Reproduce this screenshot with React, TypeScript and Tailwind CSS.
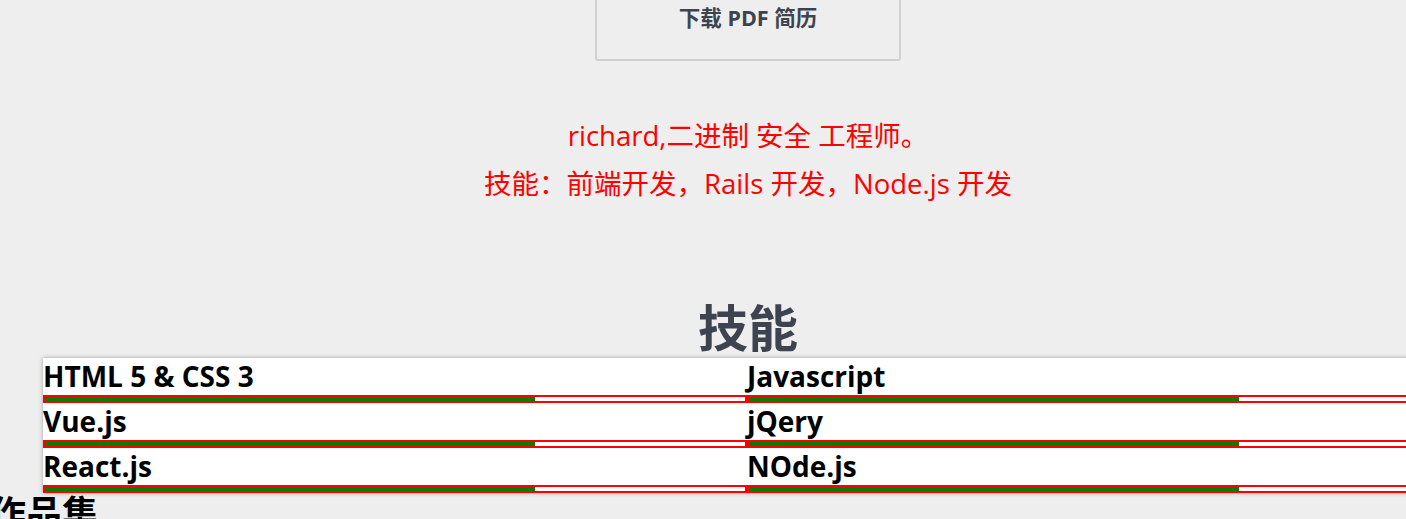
const skills = [
  { name: "HTML 5 & CSS 3", level: 70 },
  { name: "Javascript", level: 70 },
  { name: "Vue.js", level: 70 },
  { name: "jQery", level: 70 },
  { name: "React.js", level: 70 },
  { name: "NOde.js", level: 70 },
]

const font = { fontFamily: '"Open Sans", "Noto Sans CJK SC", sans-serif' }

export default function App() {
  return (
    <div className="min-h-[519px] w-full overflow-hidden bg-[#eeeeee]" style={font}>
      <div className="w-[1496px]">
        <div className="mx-auto flex h-[61px] w-[306px] justify-center rounded-b-[3px] border-2 border-t-0 border-[#d0d0d0] text-[21.5px] font-bold leading-[36px] text-[#3d4450]">
          下载 PDF 简历
        </div>

        <div className="mt-[51px] text-center text-[27.5px] leading-[48px] text-[#ff0000]">
          <p>richard,二进制 安全 工程师。</p>
          <p>技能：前端开发，Rails 开发，Node.js 开发</p>
        </div>

        <h2 className="mt-[92px] mb-[2px] text-center text-[50px] font-bold leading-[56px] text-[#3d4450]">技能</h2>

        <div className="ml-[43px] w-[1408px] bg-white shadow-[0_0_4px_rgba(0,0,0,0.35)]">
          <ul className="grid grid-cols-2">
            {skills.map((s) => (
              <li key={s.name}>
                <div className="text-[28px] font-bold leading-[37px] text-black">{s.name}</div>
                <div className="h-[8px] border-2 border-[#ff0000] bg-white">
                  <div className="h-full bg-[#008000]" style={{ width: `${s.level}%` }} />
                </div>
              </li>
            ))}
          </ul>
        </div>

        <h2 className="-ml-[10px] text-[36px] font-bold leading-[42px] text-black">作品集</h2>
      </div>
    </div>
  )
}
